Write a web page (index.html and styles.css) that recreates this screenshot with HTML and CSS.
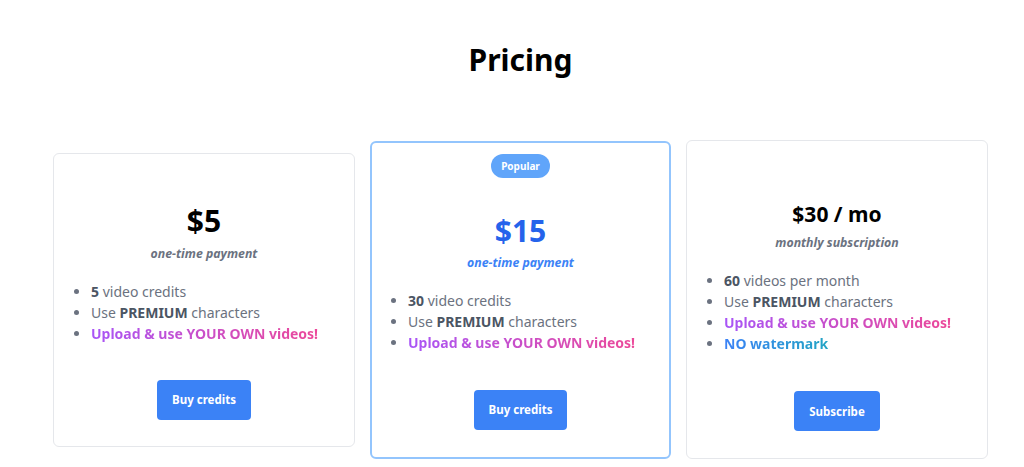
FILE: index.html
```html
<!DOCTYPE html>
<html lang="en">
<head>
<meta charset="utf-8">
<title>Pricing</title>
<link rel="stylesheet" href="styles.css">
</head>
<body>
<main class="page">
  <h1 class="title">Pricing</h1>
  <section class="plans">
    <div class="card card-basic">
      <div class="price">$5</div>
      <div class="sub">one-time payment</div>
      <ul class="features">
        <li><span><b>5</b> video credits</span></li>
        <li><span>Use <b>PREMIUM</b> characters</span></li>
        <li><span class="grad-pink">Upload &amp; use YOUR OWN videos!</span></li>
      </ul>
      <button class="btn">Buy credits</button>
    </div>
    <div class="card card-popular">
      <span class="badge">Popular</span>
      <div class="price price-blue">$15</div>
      <div class="sub sub-blue">one-time payment</div>
      <ul class="features">
        <li><span><b>30</b> video credits</span></li>
        <li><span>Use <b>PREMIUM</b> characters</span></li>
        <li><span class="grad-pink">Upload &amp; use YOUR OWN videos!</span></li>
      </ul>
      <button class="btn">Buy credits</button>
    </div>
    <div class="card card-sub">
      <div class="price price-small">$30 / mo</div>
      <div class="sub sub-small">monthly subscription</div>
      <ul class="features">
        <li><span><b>60</b> videos per month</span></li>
        <li><span>Use <b>PREMIUM</b> characters</span></li>
        <li><span class="grad-pink">Upload &amp; use YOUR OWN videos!</span></li>
        <li><span class="grad-blue">NO watermark</span></li>
      </ul>
      <button class="btn btn-sub">Subscribe</button>
    </div>
  </section>
</main>
</body>
</html>
```

FILE: styles.css
```css
* { box-sizing: border-box; }
html, body { margin: 0; padding: 0; background: #ffffff; }
body {
  font-family: "Noto Sans", "Open Sans", "DejaVu Sans", sans-serif;
  color: #111827;
}
.page {
  width: 1024px;
  padding: 42px 36px 0 53px;
}
.title {
  margin: 0;
  text-align: center;
  font-size: 30px;
  line-height: 36px;
  font-weight: 700;
  color: #000;
}
.plans {
  margin-top: 62px;
  display: grid;
  grid-template-columns: 302px 301px 302px;
  column-gap: 15px;
  align-items: center;
}
.card {
  display: flex;
  flex-direction: column;
  align-items: center;
  background: #fff;
  border: 1px solid #e5e7eb;
  border-radius: 6px;
  padding: 49px 20px 26px 20px;
}
.card-popular {
  border: 2px solid #93c5fd;
  padding: 11px 19px 27px 19px;
}
.card-sub {
  padding-top: 57px;
  padding-bottom: 27px;
}
.badge {
  display: inline-block;
  height: 24px;
  line-height: 24px;
  padding: 0 10px;
  border-radius: 999px;
  background: #60a5fa;
  color: #fff;
  font-size: 10px;
  font-weight: 700;
  margin-bottom: 35px;
}
.price {
  font-size: 30px;
  line-height: 36px;
  font-weight: 700;
  color: #000;
}
.price-blue { color: #2563eb; }
.price-small {
  font-size: 21px;
  line-height: 32px;
}
.sub {
  margin-top: 7px;
  font-size: 12.3px;
  line-height: 16px;
  font-weight: 700;
  font-style: italic;
  color: #6b7280;
}
.sub-blue { color: #3b82f6; margin-top: 6px; }
.sub-small { margin-top: 5px; }
.features {
  list-style: none;
  margin: 19px 0 0 0;
  padding: 0;
  align-self: stretch;
  font-size: 14px;
  line-height: 21px;
  color: #6b7280;
}
.features li {
  display: flex;
  align-items: center;
}
.features li::before {
  content: "";
  flex: none;
  width: 5px;
  height: 5px;
  border-radius: 50%;
  background: #6b7280;
  margin-right: 12px;
}
.features b {
  font-weight: 700;
  color: #4b5563;
}
.grad-pink {
  font-weight: 700;
  background: linear-gradient(90deg, #a855f7, #ec4899);
  -webkit-background-clip: text;
  background-clip: text;
  color: transparent;
}
.grad-blue {
  font-weight: 700;
  background: linear-gradient(90deg, #3b82f6, #14b8a6 160%);
  -webkit-background-clip: text;
  background-clip: text;
  color: transparent;
}
.btn {
  margin-top: 36px;
  height: 40px;
  padding: 0 15px;
  border: none;
  border-radius: 4px;
  background: #3b82f6;
  color: #fff;
  font-family: inherit;
  font-size: 11.5px;
  font-weight: 700;
  cursor: pointer;
}
.card-popular .btn, .card-sub .btn { margin-top: 37px; }
```
